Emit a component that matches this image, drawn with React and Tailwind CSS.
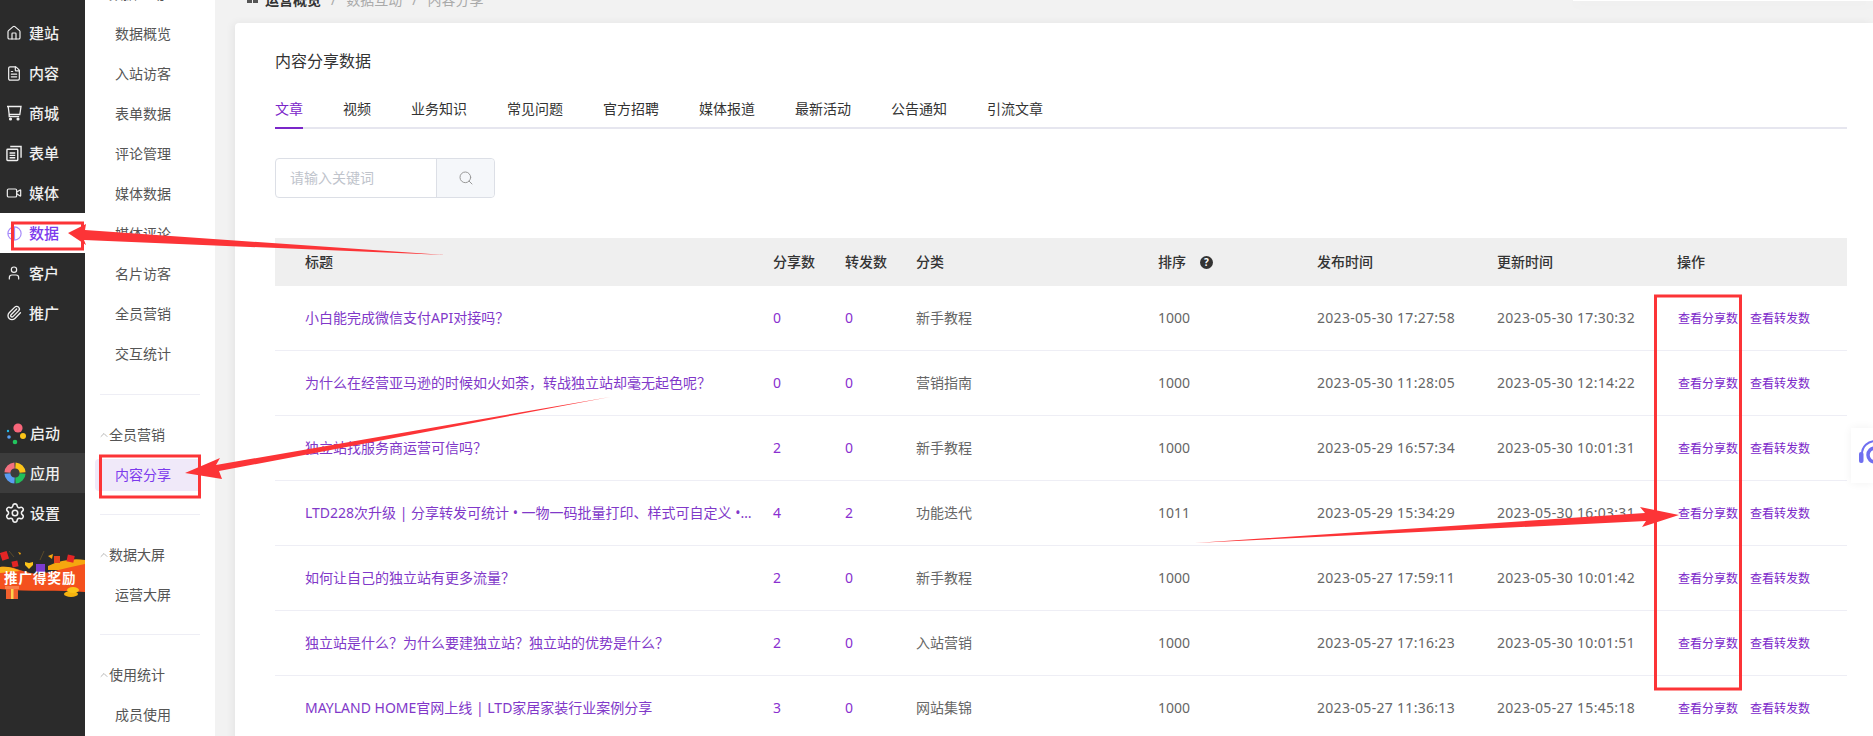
import { Search, House, FileText, Video, User, Paperclip, Settings, ChevronUp } from 'lucide-react';

const railTop = [
  { name: '建站', icon: <House size={16} strokeWidth={1.8} /> },
  { name: '内容', icon: <FileText size={17} strokeWidth={1.8} /> },
  { name: '商城', icon: <CartIcon /> },
  { name: '表单', icon: <FormIcon /> },
  { name: '媒体', icon: <Video size={16} strokeWidth={1.8} /> },
  { name: '数据', icon: <PieIcon />, active: true },
  { name: '客户', icon: <User size={18} strokeWidth={1.8} /> },
  { name: '推广', icon: <Paperclip size={16} strokeWidth={2} /> },
];

const subTop = ['数据概览', '入站访客', '表单数据', '评论管理', '媒体数据', '媒体评论', '名片访客', '全员营销', '交互统计'];

const tabs = ['文章', '视频', '业务知识', '常见问题', '官方招聘', '媒体报道', '最新活动', '公告通知', '引流文章'];

const rows = [
  ['小白能完成微信支付API对接吗？', 0, 0, '新手教程', 1000, '2023-05-30 17:27:58', '2023-05-30 17:30:32'],
  ['为什么在经营亚马逊的时候如火如荼，转战独立站却毫无起色呢？', 0, 0, '营销指南', 1000, '2023-05-30 11:28:05', '2023-05-30 12:14:22'],
  ['独立站找服务商运营可信吗？', 2, 0, '新手教程', 1000, '2023-05-29 16:57:34', '2023-05-30 10:01:31'],
  ['LTD228次升级 | 分享转发可统计 • 一物一码批量打印、样式可自定义 • 表单导出', 4, 2, '功能迭代', 1011, '2023-05-29 15:34:29', '2023-05-30 16:03:31'],
  ['如何让自己的独立站有更多流量？', 2, 0, '新手教程', 1000, '2023-05-27 17:59:11', '2023-05-30 10:01:42'],
  ['独立站是什么？为什么要建独立站？独立站的优势是什么？', 2, 0, '入站营销', 1000, '2023-05-27 17:16:23', '2023-05-30 10:01:51'],
  ['MAYLAND HOME官网上线 | LTD家居家装行业案例分享', 3, 0, '网站集锦', 1000, '2023-05-27 11:36:13', '2023-05-27 15:45:18'],
];

const gridCols = 'grid grid-cols-[498px_72px_71px_242px_159px_180px_180px_1fr] items-center';

function CartIcon() {
  return (
    <svg width="16" height="16" viewBox="0 0 16 16" fill="none" stroke="currentColor" strokeWidth="1.3">
      <path d="M1 1.5h14l-1.2 8H3.2L2.2 1.5" />
      <path d="M3.2 9.5v2.2h10" />
      <circle cx="4.5" cy="14" r="0.9" fill="currentColor" />
      <circle cx="12" cy="14" r="0.9" fill="currentColor" />
    </svg>
  );
}

function FormIcon() {
  return (
    <svg width="17" height="17" viewBox="0 0 17 17" fill="none" stroke="currentColor" strokeWidth="1.5">
      <rect x="1" y="4" width="11.5" height="12" rx="0.8" />
      <path d="M4.5 1h11.5v12" />
      <path d="M3.8 8h6M3.8 10.5h6M3.8 13h6" />
    </svg>
  );
}

function PieIcon() {
  return (
    <svg width="15" height="15" viewBox="0 0 15 15" fill="none" stroke="#a78bfa" strokeWidth="1.2">
      <circle cx="7.5" cy="7.5" r="6.6" />
      <path d="M7.5 1v6.5H1M7.5 7.5V14" />
    </svg>
  );
}

function StartIcon() {
  return (
    <svg width="24" height="24" viewBox="0 0 24 24" className="shrink-0">
      <circle cx="14" cy="7" r="4.6" fill="#f8667a" />
      <circle cx="19" cy="15" r="3" fill="#fcc419" />
      <circle cx="11" cy="21" r="2.3" fill="#22c55e" />
      <circle cx="5" cy="16" r="1.8" fill="#5aa0f2" />
      <circle cx="4" cy="10" r="1.2" fill="#22b8e6" />
    </svg>
  );
}

function AppsIcon() {
  return (
    <svg width="22" height="22" viewBox="0 0 22 22" fill="none" strokeWidth="6" className="shrink-0">
      <circle cx="11" cy="11" r="7.6" pathLength="100" strokeDasharray="23 77" strokeDashoffset="-1" stroke="#fcc419" transform="rotate(-90 11 11)" />
      <circle cx="11" cy="11" r="7.6" pathLength="100" strokeDasharray="23 77" strokeDashoffset="-1" stroke="#22bf5b" />
      <circle cx="11" cy="11" r="7.6" pathLength="100" strokeDasharray="23 77" strokeDashoffset="-1" stroke="#5b9cf0" transform="rotate(90 11 11)" />
      <circle cx="11" cy="11" r="7.6" pathLength="100" strokeDasharray="23 77" strokeDashoffset="-1" stroke="#f4707f" transform="rotate(180 11 11)" />
    </svg>
  );
}

function PromoBanner() {
  return (
    <svg width="85" height="70" viewBox="0 0 85 70" className="block">
      <path d="M48 26C60 20 74 18 85 20V30H48Z" fill="#f5a70f" />
      <path d="M0 27C14 26 20 31 30 33 45 36 62 28 85 24V52C60 50 30 52 0 49Z" fill="#f4511e" />
      <path d="M0 27C8 26 14 28 20 31L0 33Z" fill="#f9b21a" />
      <rect x="1" y="12" width="7" height="8" fill="#e32525" transform="rotate(-18 4 16)" />
      <rect x="12" y="21" width="6" height="6" fill="#e32525" transform="rotate(-12 15 24)" />
      <rect x="54" y="16" width="6" height="7" fill="#e8431f" />
      <rect x="67" y="15" width="7" height="7" fill="#e32525" transform="rotate(12 70 19)" />
      <path d="M25 22l4 1 4-1 0 3-4 4-4-4Z" fill="#fcc419" />
      <rect x="36" y="24" width="9" height="8" fill="#7c3bd0" />
      <path d="M48 16l5-2-1 5Z" fill="#f5a70f" />
      <path d="M18 12l3 1-1 2Z" fill="#f5a70f" />
      <path d="M40 20l4-9M9 11l5 6" stroke="#5a4a2a" strokeWidth="1" />
      <rect x="6" y="47" width="12" height="12" fill="#f1602d" />
      <rect x="11" y="47" width="2.5" height="12" fill="#fcd34d" />
      <rect x="5" y="46" width="14" height="3" fill="#f87f4b" />
      <ellipse cx="71" cy="54" rx="7" ry="3" fill="#f5b30f" />
      <ellipse cx="73" cy="50" rx="6" ry="3" fill="#fcc419" />
      <text x="4" y="43" fill="#fff" fontSize="13.5" fontWeight="700" letterSpacing="1">推广得奖励</text>
    </svg>
  );
}

function RailItem({ name, icon, active, wide }) {
  return (
    <div className={`flex h-10 items-center ${wide ? 'gap-1 pl-1' : 'gap-[7px] pl-[6px]'} ${active ? 'bg-white text-[#7c3aed]' : 'text-[#f0f0f0]'}`}>
      <span className={`flex shrink-0 items-center ${wide ? 'w-[22px] justify-start' : 'w-4 justify-center'}`}>{icon}</span>
      <span className="text-[15px] leading-none font-medium">{name}</span>
    </div>
  );
}

function SubGroup({ title, items }) {
  return (
    <div className="border-t border-[#eeeef5] pt-5 pb-[19px]">
      <div className="-ml-[2px] flex h-10 items-center text-sm text-[#555]">
        <ChevronUp size={12} strokeWidth={1.2} className="-mr-px text-[#888]" />
        <span>{title}</span>
      </div>
      {items.map((item) => (
        <div key={item.name} className="-ml-[5px] flex h-10 items-center">
          <span className={`flex h-8 w-[105px] items-center rounded-l pl-5 text-sm ${item.active ? 'bg-[#f0e9f9] text-[#7c3aed]' : 'text-[#555]'}`}>
            {item.name}
          </span>
        </div>
      ))}
    </div>
  );
}

function Annotations() {
  return (
    <svg width="1873" height="736" viewBox="0 0 1873 736" fill="none" className="pointer-events-none absolute top-0 left-0">
      <rect x="12.5" y="223" width="70" height="26" stroke="#fc3437" strokeWidth="3" />
      <rect x="100.5" y="456" width="99" height="41" stroke="#fc3437" strokeWidth="3" />
      <rect x="1655.5" y="296" width="85" height="393" stroke="#fc3437" strokeWidth="3" />
      <polygon points="68,233 86,224 85,230 445,255 84,240 86,245" fill="#fc3437" />
      <polygon points="185,473 220,458 216,465 610,397 219,471 222,479" fill="#fc3437" />
      <polygon points="1679,515 1640,507 1645,513 1195,543 1646,521 1642,527" fill="#fc3437" />
    </svg>
  );
}

export default function App() {
  return (
    <div className="relative flex h-[736px] w-[1873px] overflow-hidden bg-[#f2f2f2] font-['Noto_Sans','Noto_Sans_CJK_SC',sans-serif]">
      {/* dark rail */}
      <aside className="flex w-[85px] shrink-0 flex-col bg-[#2b2b2b] pt-[13px]">
        {railTop.map((item) => (
          <RailItem key={item.name} {...item} />
        ))}
        <div className="mt-20">
          <RailItem name="启动" icon={<StartIcon />} wide />
          <div className="bg-[#3c3c3c]">
            <RailItem name="应用" icon={<AppsIcon />} wide />
          </div>
          <RailItem name="设置" icon={<Settings size={22} strokeWidth={1.7} className="shrink-0" />} wide />
        </div>
        <div className="mt-[7px]">
          <PromoBanner />
        </div>
      </aside>

      {/* sub menu */}
      <aside className="w-[130px] shrink-0 bg-white">
        <div className="-mt-[26px] pr-[15px] pl-[15px]">
          <div className="-ml-[2px] flex h-10 items-center text-sm text-[#555]">
            <ChevronUp size={12} strokeWidth={1.2} className="-mr-px text-[#888]" />
            <span>数据互动</span>
          </div>
          <div className="pb-5">
            {subTop.map((name) => (
              <div key={name} className="flex h-10 items-center pl-[15px] text-sm text-[#555]">
                {name}
              </div>
            ))}
          </div>
          <SubGroup title="全员营销" items={[{ name: '内容分享', active: true }]} />
          <SubGroup title="数据大屏" items={[{ name: '运营大屏' }]} />
          <SubGroup title="使用统计" items={[{ name: '成员使用' }]} />
        </div>
      </aside>

      {/* main */}
      <main className="min-w-0 flex-1 pl-5">
        <div className="-mt-[10px] flex h-[33px] items-start gap-[10px] pl-3 text-sm leading-5 text-[#aaa]">
          <span className="mt-[7px] -mr-[3px] flex gap-px">
            <span className="h-[6px] w-[5px] bg-[#555]" />
            <span className="h-[6px] w-[5px] bg-[#555]" />
          </span>
          <span className="font-semibold text-[#333]">运营概览</span>
          <span>/</span>
          <span>数据互动</span>
          <span>/</span>
          <span>内容分享</span>
        </div>

        <section className="h-[720px] rounded-tl bg-white pt-[26px] pl-10 shadow-[-2px_0_8px_rgba(0,0,0,0.06)]">
          <h1 className="text-base leading-6 font-normal text-[#333]">内容分享数据</h1>

          <div className="mt-[25px] mr-[26px] flex gap-10 border-b-2 border-[#e6e6ef]">
            {tabs.map((tab, i) => (
              <div key={tab} className={`-mb-[2px] border-b-2 pb-[7px] text-sm leading-[22px] ${i === 0 ? 'border-[#7b26c9] text-[#7b26c9]' : 'border-transparent text-[#333]'}`}>
                {tab}
              </div>
            ))}
          </div>

          <div className="mt-[29px] flex h-10 w-[220px] rounded border border-[#dcdfe6]">
            <div className="flex flex-1 items-center border-r border-[#dcdfe6] pl-[14px] text-sm text-[#c0c4cc]">请输入关键词</div>
            <div className="flex w-[57px] items-center justify-center rounded-r bg-[#f5f7fa] text-[#999]">
              <Search size={16} strokeWidth={1.5} />
            </div>
          </div>

          <div className="mt-10 mr-[26px]">
            <div className={`${gridCols} h-12 bg-[#efefef] text-sm font-medium text-[#333]`}>
              <span className="pl-[30px]">标题</span>
              <span>分享数</span>
              <span>转发数</span>
              <span>分类</span>
              <span className="flex items-center gap-[14px]">
                排序
                <span className="flex h-[13px] w-[13px] items-center justify-center rounded-full bg-[#333] text-[10px] leading-none font-bold text-white">?</span>
              </span>
              <span>发布时间</span>
              <span>更新时间</span>
              <span>操作</span>
            </div>
            {rows.map((row) => (
              <div key={row[0]} className={`${gridCols} h-[65px] border-b border-[#eeeef5] text-sm text-[#666]`}>
                <span className="truncate pr-5 pl-[30px] text-[#8138c9]">{row[0]}</span>
                <span className="text-[#8a2fd0]">{row[1]}</span>
                <span className="text-[#8a2fd0]">{row[2]}</span>
                <span>{row[3]}</span>
                <span>{row[4]}</span>
                <span className="tracking-[0.3px]">{row[5]}</span>
                <span className="tracking-[0.3px]">{row[6]}</span>
                <span className="flex gap-3 pt-px pl-px text-xs text-[#7b26c9]">
                  <span>查看分享数</span>
                  <span>查看转发数</span>
                </span>
              </div>
            ))}
          </div>
        </section>
      </main>

      {/* top right dropdown edge */}
      <div className="absolute top-0 right-0 h-px w-[300px] bg-white shadow-[0_2px_12px_rgba(0,0,0,0.12)]" />

      {/* floating support button */}
      <div className="absolute top-[428px] right-0 flex h-[55px] w-[22px] items-center overflow-hidden bg-white pb-[6px] pl-2 shadow-[0_0_10px_rgba(0,0,0,0.06)]">
        <svg width="30" height="30" viewBox="0 0 30 30" fill="none" className="shrink-0">
          <path d="M3 16A13 13 0 0 1 29 16" stroke="#6f6ff0" strokeWidth="2" />
          <circle cx="16" cy="17" r="7" stroke="#6f6ff0" strokeWidth="3.5" />
          <rect x="0" y="14" width="4.5" height="11" rx="2" fill="#6f6ff0" />
        </svg>
      </div>

      <Annotations />
    </div>
  );
}
